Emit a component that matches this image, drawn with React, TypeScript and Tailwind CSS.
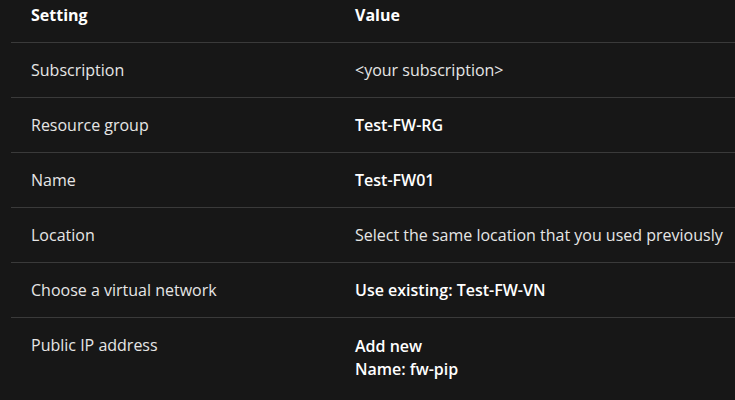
const rows: { label: string; value: string[]; bold: boolean }[] = [
  { label: 'Subscription', value: ['<your subscription>'], bold: false },
  { label: 'Resource group', value: ['Test-FW-RG'], bold: true },
  { label: 'Name', value: ['Test-FW01'], bold: true },
  { label: 'Location', value: ['Select the same location that you used previously'], bold: false },
  { label: 'Choose a virtual network', value: ['Use existing: Test-FW-VN'], bold: true },
  { label: 'Public IP address', value: ['Add new', 'Name: fw-pip'], bold: true },
]

export default function App() {
  return (
    <div className="h-[400px] w-[735px] overflow-hidden bg-[#171717] pl-[11px] text-[16px] leading-[21px] text-[#e6e6e6] [font-family:'Open_Sans',sans-serif]">
      <div className="flex h-[42px] pt-[5px] font-bold text-white">
        <div className="w-[324px] pl-5">Setting</div>
        <div className="pl-5">Value</div>
      </div>
      {rows.map((r) => (
        <div key={r.label} className="flex border-t border-[#3a3a3a] pt-[17px] pb-[16px]">
          <div className="w-[324px] shrink-0 pl-5">{r.label}</div>
          <div className={r.bold ? 'pl-5 font-semibold text-white' : 'pl-5'}>
            {r.value.map((v) => (
              <div key={v} className={r.value.length > 1 ? '-mt-[1px] leading-[24px]' : ''}>{v}</div>
            ))}
          </div>
        </div>
      ))}
    </div>
  )
}
